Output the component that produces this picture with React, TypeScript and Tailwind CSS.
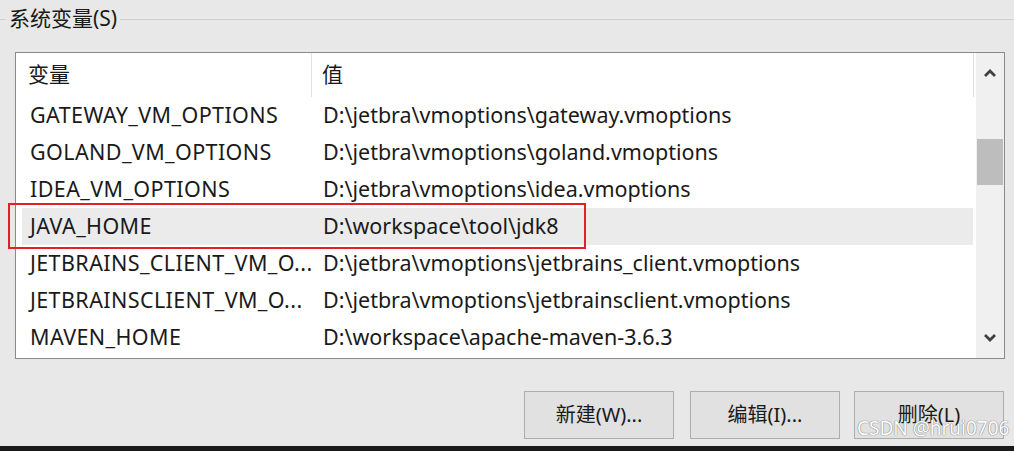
import React from "react";

const rows: [string, string][] = [
  ["GATEWAY_VM_OPTIONS", "D:\\jetbra\\vmoptions\\gateway.vmoptions"],
  ["GOLAND_VM_OPTIONS", "D:\\jetbra\\vmoptions\\goland.vmoptions"],
  ["IDEA_VM_OPTIONS", "D:\\jetbra\\vmoptions\\idea.vmoptions"],
  ["JAVA_HOME", "D:\\workspace\\tool\\jdk8"],
  ["JETBRAINS_CLIENT_VM_O...", "D:\\jetbra\\vmoptions\\jetbrains_client.vmoptions"],
  ["JETBRAINSCLIENT_VM_O...", "D:\\jetbra\\vmoptions\\jetbrainsclient.vmoptions"],
  ["MAVEN_HOME", "D:\\workspace\\apache-maven-3.6.3"],
];

const font = { fontFamily: '"Noto Sans", "Noto Sans CJK SC", sans-serif' };

function Button({ label, className = "" }: { label: string; className?: string }) {
  return (
    <div
      className={
        "w-[150px] h-[48px] border border-[#adadad] bg-[#e1e1e1] flex items-center justify-center text-[20px] text-[#1a1a1a] " +
        className
      }
    >
      {label}
    </div>
  );
}

export default function App() {
  return (
    <div
      className="relative w-[1014px] h-[451px] bg-[#e8e8e8] overflow-hidden flex flex-col"
      style={font}
    >
      {/* group title */}
      <div className="h-[40px] flex items-center">
        <div className="w-[6px] h-px bg-[#cfcfcf] mt-[-2px]" />
        <span className="px-[3px] text-[21px] text-[#1a1a1a] leading-none mt-[-4px]">系统变量(S)</span>
        <div className="flex-1 h-px bg-[#cfcfcf] mt-[-2px]" />
      </div>

      {/* list view */}
      <div className="ml-[15px] mt-[12px] w-[990px] h-[307px] border border-[#8a8a8a] bg-white flex">
        <div className="flex-1 flex flex-col">
          <div className="h-[44px] flex items-center text-[21px] text-[#1a1a1a]">
            <div className="w-[296px] pl-[12px] h-full flex items-center border-r border-[#e0e0e0]">变量</div>
            <div className="flex-1 pl-[10px] h-full flex items-center border-r border-[#e0e0e0]">值</div>
          </div>
          {rows.map(([k, v]) => (
            <div
              key={k}
              className={
                "h-[37px] flex items-center text-[21.5px] text-[#1a1a1a] ml-[6px] mr-[1px] " +
                (k === "JAVA_HOME" ? "bg-[#ebebeb]" : "")
              }
            >
              <div className="w-[296px] pl-[8px] whitespace-nowrap tracking-[0.4px]">{k}</div>
              <div className="flex-1 pl-[5px] whitespace-nowrap">{v}</div>
            </div>
          ))}
        </div>
        {/* scrollbar */}
        <div className="w-[28px] ml-[2px] bg-[#f0f0f0] flex flex-col">
          <div className="h-[40px] flex items-center justify-center">
            <svg width="14" height="10" viewBox="0 0 14 10">
              <path d="M2 8 L7 3 L12 8" stroke="#404040" strokeWidth="2.8" fill="none" />
            </svg>
          </div>
          <div className="h-[46px] mt-[46px] mx-px bg-[#bdbdbd]" />
          <div className="flex-1" />
          <div className="h-[40px] flex items-center justify-center">
            <svg width="14" height="10" viewBox="0 0 14 10">
              <path d="M2 2 L7 7 L12 2" stroke="#404040" strokeWidth="2.8" fill="none" />
            </svg>
          </div>
        </div>
      </div>

      {/* buttons */}
      <div className="mt-[32px] flex pl-[524px]">
        <Button label="新建(W)..." />
        <Button label="编辑(I)..." className="ml-[16px]" />
        <Button label="删除(L)" className="ml-[14px]" />
      </div>

      <div className="flex-1" />
      <div className="h-[5px] bg-[#1a1a1a]" />

      {/* selection annotation */}
      <div className="absolute left-[8px] top-[203px] w-[578px] h-[46px] border-2 border-[#e61e28]" />

      {/* watermark */}
      <div
        className="absolute left-[857px] top-[419px] text-[19px] text-white leading-none"
        style={{ textShadow: "0 0 1px #777, 0 0 1px #777" }}
      >
        CSDN @hrui0706
      </div>
    </div>
  );
}
